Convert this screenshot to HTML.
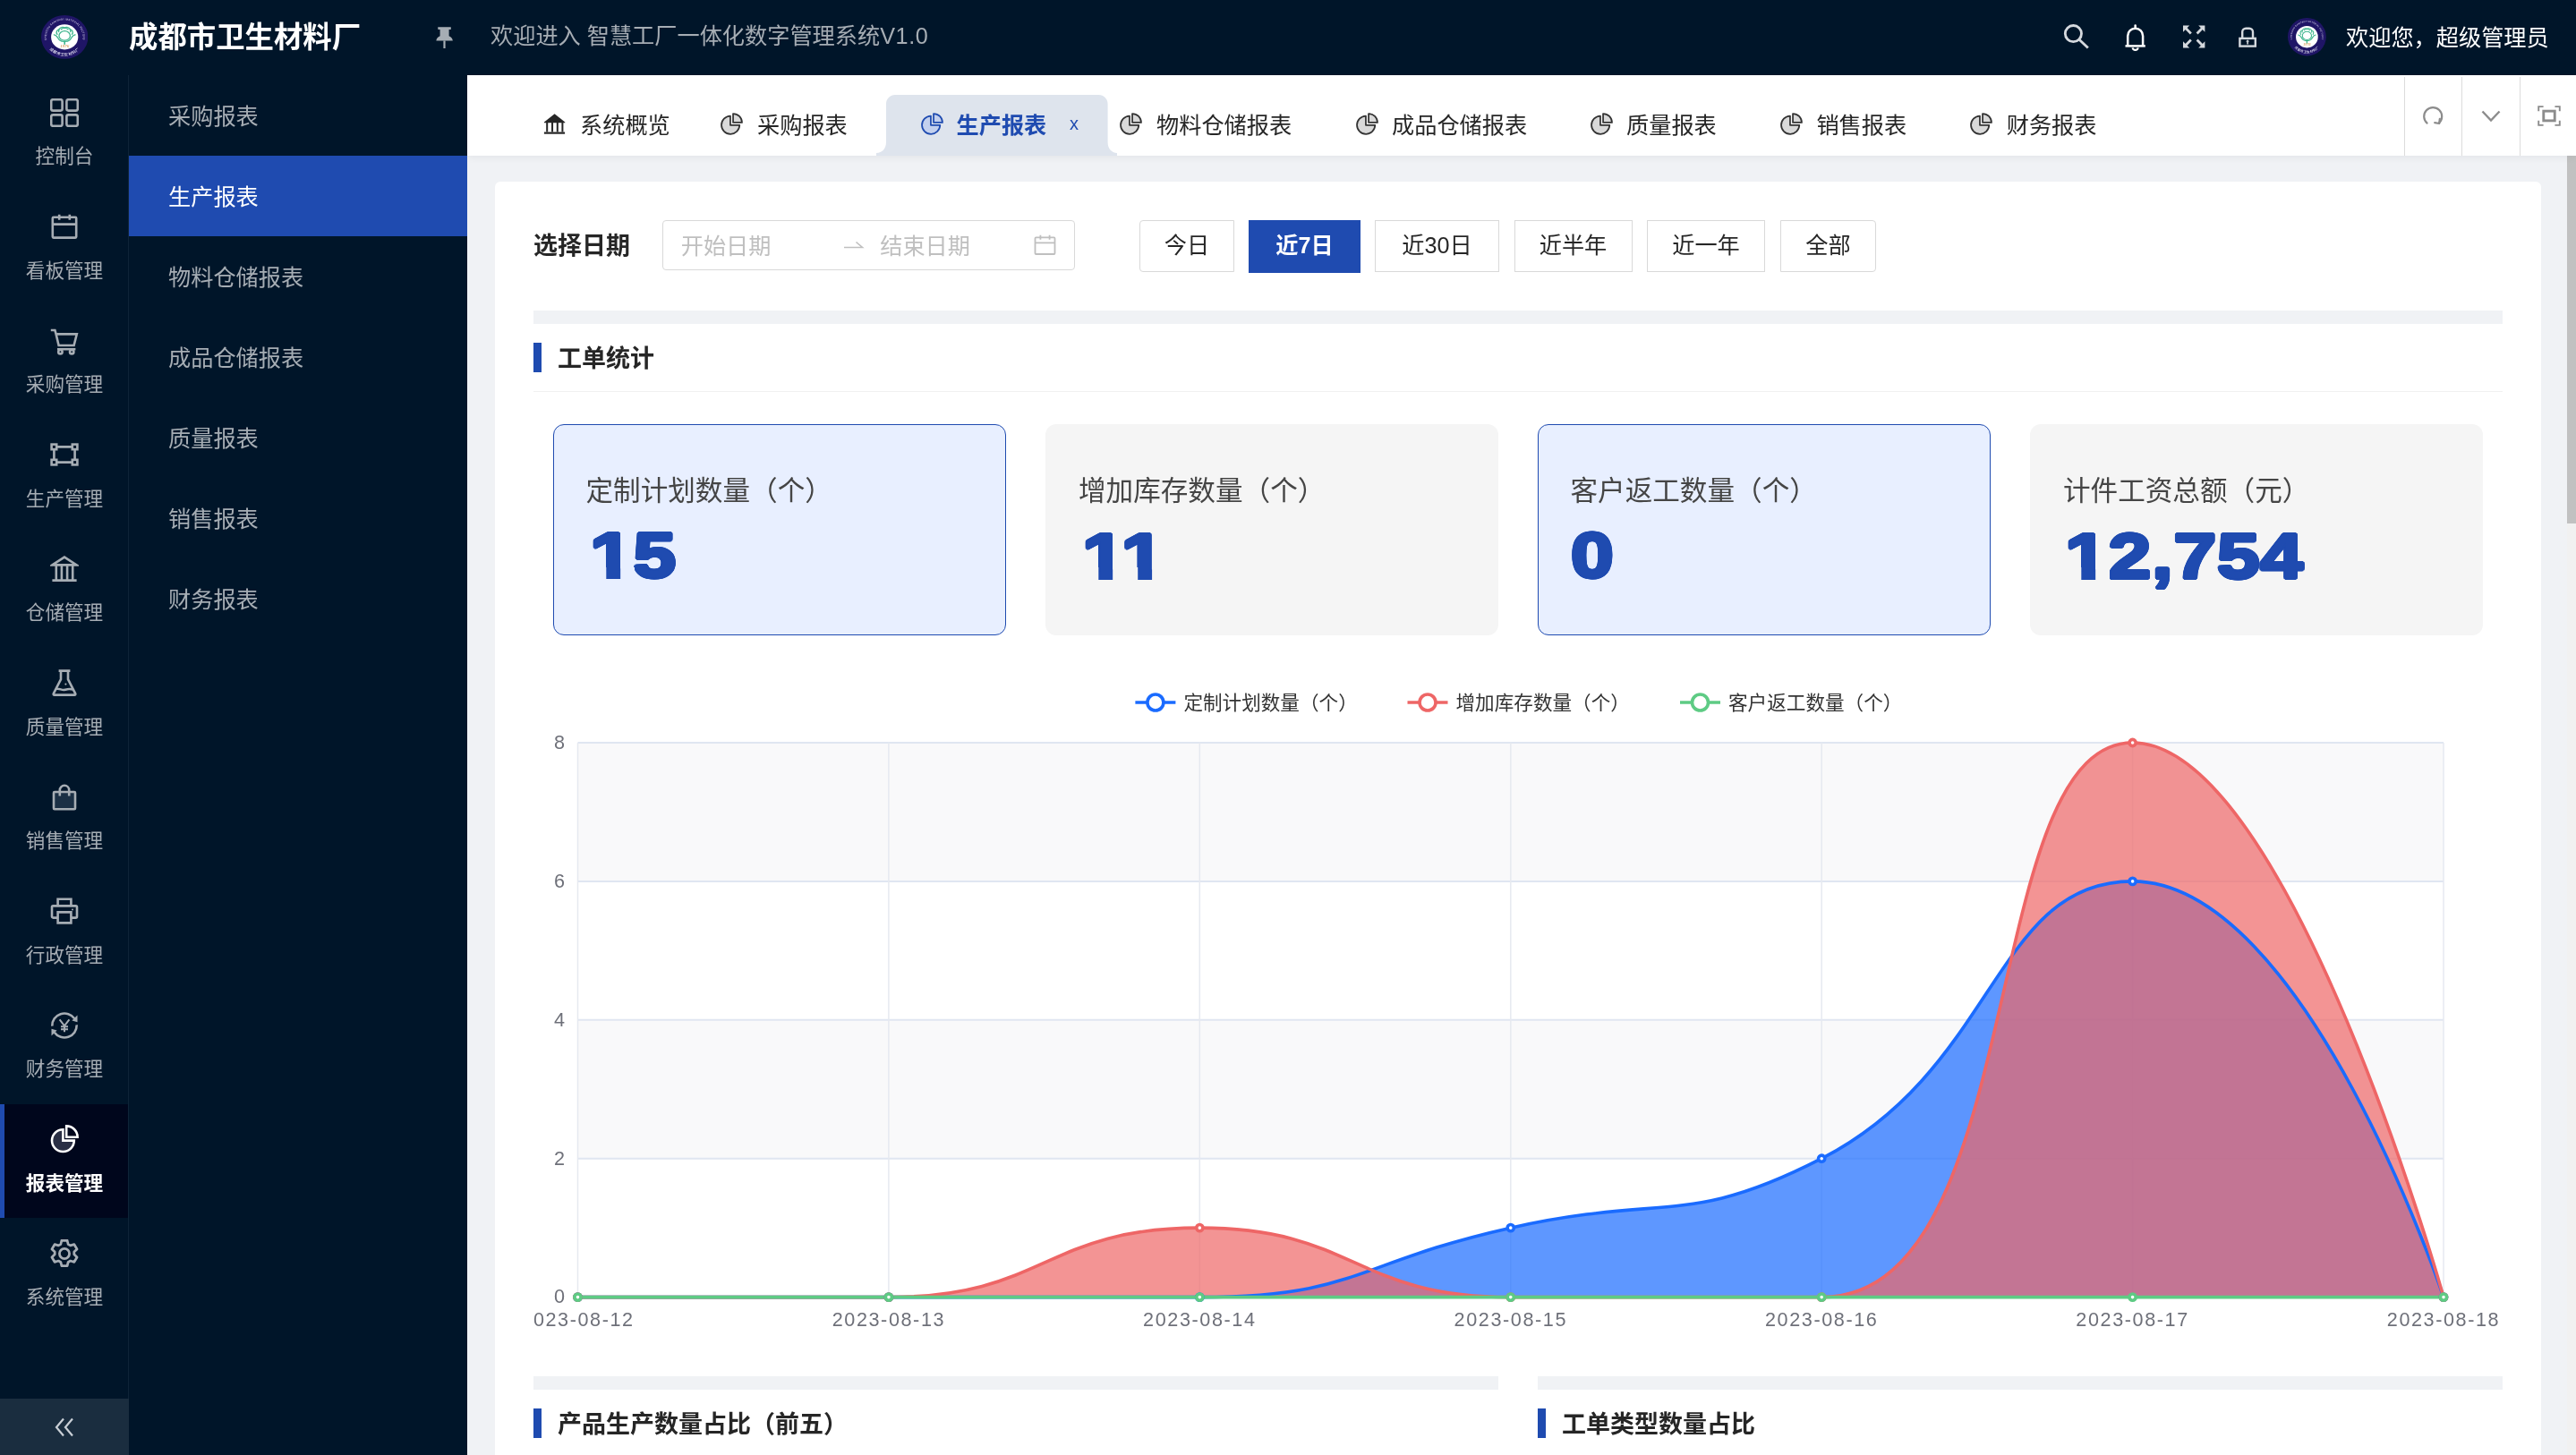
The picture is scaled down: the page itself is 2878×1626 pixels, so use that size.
<!DOCTYPE html>
<html lang="zh-CN"><head><meta charset="utf-8"><title>成都市卫生材料厂 - 生产报表</title>
<style>
*{box-sizing:border-box;margin:0;padding:0}
html,body{width:2878px;height:1626px;overflow:hidden;background:#f0f2f5}
body{position:relative;font-family:"Liberation Sans","Noto Sans CJK SC",sans-serif;color:#262626;-webkit-font-smoothing:antialiased}
.abs{position:absolute}
#hdr,#side,#sub,#tabs,#main{will-change:transform}
.t{position:absolute;white-space:nowrap;line-height:1}
#hdr{position:absolute;left:0;top:0;width:2878px;height:84px;background:#001529}
#side{position:absolute;left:0;top:84px;width:144px;height:1542px;background:#001529}
#sub{position:absolute;left:143px;top:84px;width:379px;height:1542px;background:#001529;border-left:1px solid #0f2438}
.si{position:absolute;left:0;width:143px;height:127px;color:#a6adb4}
.si svg{position:absolute;left:56px;top:23.2px;width:32px;height:32px;fill:none;stroke:#a6adb4;stroke-width:2.6}
.si span{position:absolute;left:0;width:144px;text-align:center;top:76.5px;font-size:21.6px;line-height:24px;white-space:nowrap}
.si.act{background:#00061c;color:#fff}
.si.act:before{content:"";position:absolute;left:0;top:0;width:5px;height:100%;background:#1f4bb0}
.si.act svg{stroke:#fff}
.si.act span{font-weight:700}
.sm{position:absolute;left:0;width:378px;height:90px;color:#a6adb4;font-size:25.2px;line-height:93px;padding-left:44px;white-space:nowrap}
.sm.act{background:#1f4bb0;color:#fff}
#tabs{position:absolute;left:522px;top:84px;width:2356px;height:90px;background:#fff;box-shadow:0 2px 8px rgba(0,21,41,.06)}
.tab{position:absolute;top:0;height:90px}
.tab .tx{position:absolute;top:43px;font-size:25.2px;line-height:28px;color:#262626;white-space:nowrap}
.tab svg{position:absolute}
#card{position:absolute;left:553px;top:203px;width:2286px;height:1500px;background:#fff;border-radius:6px}
.bar{position:absolute;height:15px;background:#f0f2f5}
.sec{position:absolute;height:33px}
.sec i{position:absolute;left:0;top:0;width:9px;height:33px;background:#1f4bb0}
.sec b{position:absolute;left:27px;top:3px;font-size:27px;line-height:30px;font-weight:700;color:#262626;white-space:nowrap}
.btn{position:absolute;top:246px;height:57.6px;border:1px solid #d9d9d9;border-radius:0;background:#fff;font-size:25.2px;line-height:55px;text-align:center;color:#262626;white-space:nowrap}
.btn.first{border-radius:4px 0 0 4px}.btn.last{border-radius:0 4px 4px 0}
.btn.on{height:58.6px;background:#1f4bb0;border-color:#1f4bb0;color:#fff;font-weight:700}
.stat{position:absolute;top:474px;width:506px;height:236px;border-radius:12px;background:#f5f5f5}
.stat.hl{background:#e8efff;border:1.5px solid #1f4bb0}
.stat .lb{position:absolute;left:37px;top:56px;font-size:30.6px;line-height:36px;color:#454545;white-space:nowrap}
.stat.hl .lb{left:35.5px;top:54.5px}
.stat .nm{position:absolute;left:40px;top:102.8px;font-family:"Liberation Sans",sans-serif;font-weight:700;font-size:70.5px;line-height:90px;color:#1f4bb0;white-space:nowrap;text-shadow:1.70px 0.00px 0 #1f4bb0,1.57px 0.65px 0 #1f4bb0,1.20px 1.20px 0 #1f4bb0,0.65px 1.57px 0 #1f4bb0,0.00px 1.70px 0 #1f4bb0,-0.65px 1.57px 0 #1f4bb0,-1.20px 1.20px 0 #1f4bb0,-1.57px 0.65px 0 #1f4bb0,-1.70px 0.00px 0 #1f4bb0,-1.57px -0.65px 0 #1f4bb0,-1.20px -1.20px 0 #1f4bb0,-0.65px -1.57px 0 #1f4bb0,-0.00px -1.70px 0 #1f4bb0,0.65px -1.57px 0 #1f4bb0,1.20px -1.20px 0 #1f4bb0,1.57px -0.65px 0 #1f4bb0;letter-spacing:.5px;transform:scaleX(1.22);transform-origin:left center}
.stat.hl .nm{top:101.3px}
.stat .nm i{position:absolute;top:57.5px;height:15.5px;background:#f5f5f5}
.stat.hl .nm i{background:#e8efff}
</style></head>
<body>
<div id="main" class="abs" style="left:0;top:0;width:2878px;height:1626px"><div id="card"></div>
<div class="abs" style="left:2868px;top:174px;width:10px;height:1452px;background:#f1f1f1"></div>
<div class="abs" style="left:2868px;top:174px;width:10px;height:411px;background:#c1c1c1"></div>
<div class="t" style="left:596px;top:260.4px;font-size:27px;line-height:30px;font-weight:700;color:#262626">选择日期</div>
<div class="abs" style="left:740px;top:246px;width:461px;height:56px;border:1px solid #d9d9d9;border-radius:4px;background:#fff"></div>
<div class="t" style="left:760.7px;top:260.7px;font-size:25.2px;line-height:28px;color:#bfbfbf">开始日期</div>
<svg class="abs" style="left:942px;top:266px;width:24px;height:14px" viewBox="0 0 24 14" fill="none" stroke="#bfbfbf" stroke-width="1.600"><path d="M1 10.500h20.500l-7-6"/></svg>
<div class="t" style="left:983.2px;top:260.7px;font-size:25.2px;line-height:28px;color:#bfbfbf">结束日期</div>
<svg class="abs" style="left:1155px;top:261.3px;width:25px;height:25px" viewBox="0 0 25 25" fill="none" stroke="#bfbfbf" stroke-width="1.800"><rect x="1.500" y="4.400" width="22" height="18.600" rx="1"/><path d="M7.400 1.800v5M17.600 1.800v5M1.500 10.400h22"/></svg>
<div class="btn first" style="left:1273px;width:106px">今日</div>
<div class="btn on" style="left:1395px;width:125px">近7日</div>
<div class="btn" style="left:1536px;width:139px">近30日</div>
<div class="btn" style="left:1691.5px;width:132px">近半年</div>
<div class="btn" style="left:1840px;width:132px">近一年</div>
<div class="btn last" style="left:1989px;width:107px">全部</div>
<div class="bar" style="left:596px;top:347px;width:2200px"></div>
<div class="sec" style="left:596px;top:383px"><i></i><b>工单统计</b></div>
<div class="abs" style="left:596px;top:436.500px;width:2200px;height:1.500px;background:#f0f0f0"></div>
<div class="stat hl" style="left:618px"><div class="lb">定制计划数量（个）</div><div class="nm" style="left:40.2px">15<i style="left:0.84px;width:13.91px"></i><i style="left:27.83px;width:13.02px"></i></div></div>
<div class="stat" style="left:1168px"><div class="lb">增加库存数量（个）</div><div class="nm" style="left:40.6px">11<i style="left:0.84px;width:13.91px"></i><i style="left:27.83px;width:13.02px"></i><i style="left:36.66px;width:13.91px"></i><i style="left:63.65px;width:13.02px"></i></div></div>
<div class="stat hl" style="left:1718px"><div class="lb">客户返工数量（个）</div><div class="nm" style="left:36.2px">0</div></div>
<div class="stat" style="left:2268px"><div class="lb">计件工资总额（元）</div><div class="nm" style="left:39px">12,754<i style="left:0.84px;width:13.91px"></i><i style="left:27.83px;width:13.02px"></i></div></div>
<svg class="abs" style="left:596px;top:740px;width:2200px;height:790px;overflow:hidden" viewBox="0 0 2200 790" font-family="Liberation Sans,Noto Sans CJK SC,sans-serif">
<rect x="49.5" y="90.0" width="2084.5" height="154.9" fill="#f9f9fa"/>
<rect x="49.5" y="399.8" width="2084.5" height="154.9" fill="#f9f9fa"/>
<path d="M49.5 709.6H2134.0" stroke="#e0e6f1" stroke-width="2" fill="none"/>
<path d="M49.5 554.7H2134.0" stroke="#e0e6f1" stroke-width="2" fill="none"/>
<path d="M49.5 399.8H2134.0" stroke="#e0e6f1" stroke-width="2" fill="none"/>
<path d="M49.5 244.9H2134.0" stroke="#e0e6f1" stroke-width="2" fill="none"/>
<path d="M49.5 90.0H2134.0" stroke="#e0e6f1" stroke-width="2" fill="none"/>
<path d="M49.5 90.0V709.6" stroke="#e6e9f0" stroke-width="1.500" fill="none"/>
<path d="M396.9 90.0V709.6" stroke="#e6e9f0" stroke-width="1.500" fill="none"/>
<path d="M744.3 90.0V709.6" stroke="#e6e9f0" stroke-width="1.500" fill="none"/>
<path d="M1091.8 90.0V709.6" stroke="#e6e9f0" stroke-width="1.500" fill="none"/>
<path d="M1439.2 90.0V709.6" stroke="#e6e9f0" stroke-width="1.500" fill="none"/>
<path d="M1786.6 90.0V709.6" stroke="#e6e9f0" stroke-width="1.500" fill="none"/>
<path d="M2134.0 90.0V709.6" stroke="#e6e9f0" stroke-width="1.500" fill="none"/>
<text x="35.0" y="716.4" font-size="21.600" text-anchor="end" fill="#6e7079">0</text>
<text x="35.0" y="561.5" font-size="21.600" text-anchor="end" fill="#6e7079">2</text>
<text x="35.0" y="406.6" font-size="21.600" text-anchor="end" fill="#6e7079">4</text>
<text x="35.0" y="251.7" font-size="21.600" text-anchor="end" fill="#6e7079">6</text>
<text x="35.0" y="96.8" font-size="21.600" text-anchor="end" fill="#6e7079">8</text>
<text x="49.5" y="741.6" font-size="21.600" text-anchor="middle" fill="#6e7079" letter-spacing="1.600">2023-08-12</text>
<text x="396.9" y="741.6" font-size="21.600" text-anchor="middle" fill="#6e7079" letter-spacing="1.600">2023-08-13</text>
<text x="744.3" y="741.6" font-size="21.600" text-anchor="middle" fill="#6e7079" letter-spacing="1.600">2023-08-14</text>
<text x="1091.8" y="741.6" font-size="21.600" text-anchor="middle" fill="#6e7079" letter-spacing="1.600">2023-08-15</text>
<text x="1439.2" y="741.6" font-size="21.600" text-anchor="middle" fill="#6e7079" letter-spacing="1.600">2023-08-16</text>
<text x="1786.6" y="741.6" font-size="21.600" text-anchor="middle" fill="#6e7079" letter-spacing="1.600">2023-08-17</text>
<text x="2134.0" y="741.6" font-size="21.600" text-anchor="middle" fill="#6e7079" letter-spacing="1.600">2023-08-18</text>
<path d="M49.50 709.60 C49.50 709.60 223.21 709.60 396.92 709.60 C570.63 709.60 572.74 709.60 744.34 709.60 C920.16 709.60 918.05 670.87 1091.76 632.15 C1265.47 593.42 1288.63 632.15 1439.18 554.70 C1636.05 453.42 1631.95 244.90 1786.60 244.90 C1979.37 244.90 2134.02 709.60 2134.02 709.60 L2134.02 709.60 L49.50 709.60Z" fill="#1a6bff" fill-opacity="0.7" stroke="none"/>
<path d="M49.50 709.60 C49.50 709.60 225.32 709.60 396.92 709.60 C572.74 709.60 570.63 632.15 744.34 632.15 C918.05 632.15 915.94 709.60 1091.76 709.60 C1263.36 709.60 1325.07 709.60 1439.18 709.60 C1672.49 709.60 1612.89 90.00 1786.60 90.00 C1960.31 90.00 2134.02 709.60 2134.02 709.60 L2134.02 709.60 L49.50 709.60Z" fill="#ee6666" fill-opacity="0.7" stroke="none"/>
<path d="M49.50 709.60 C49.50 709.60 223.21 709.60 396.92 709.60 C570.63 709.60 570.63 709.60 744.34 709.60 C918.05 709.60 918.05 709.60 1091.76 709.60 C1265.47 709.60 1265.47 709.60 1439.18 709.60 C1612.89 709.60 1612.89 709.60 1786.60 709.60 C1960.31 709.60 2134.02 709.60 2134.02 709.60 L2134.02 709.60 L49.50 709.60Z" fill="#5ecb84" fill-opacity="0.7" stroke="none"/>
<path d="M49.50 709.60 C49.50 709.60 223.21 709.60 396.92 709.60 C570.63 709.60 572.74 709.60 744.34 709.60 C920.16 709.60 918.05 670.87 1091.76 632.15 C1265.47 593.42 1288.63 632.15 1439.18 554.70 C1636.05 453.42 1631.95 244.90 1786.60 244.90 C1979.37 244.90 2134.02 709.60 2134.02 709.60" fill="none" stroke="#1a6bff" stroke-width="3.600" stroke-linejoin="bevel"/>
<path d="M49.50 709.60 C49.50 709.60 225.32 709.60 396.92 709.60 C572.74 709.60 570.63 632.15 744.34 632.15 C918.05 632.15 915.94 709.60 1091.76 709.60 C1263.36 709.60 1325.07 709.60 1439.18 709.60 C1672.49 709.60 1612.89 90.00 1786.60 90.00 C1960.31 90.00 2134.02 709.60 2134.02 709.60" fill="none" stroke="#ee6666" stroke-width="3.600" stroke-linejoin="bevel"/>
<path d="M49.50 709.60 C49.50 709.60 223.21 709.60 396.92 709.60 C570.63 709.60 570.63 709.60 744.34 709.60 C918.05 709.60 918.05 709.60 1091.76 709.60 C1265.47 709.60 1265.47 709.60 1439.18 709.60 C1612.89 709.60 1612.89 709.60 1786.60 709.60 C1960.31 709.60 2134.02 709.60 2134.02 709.60" fill="none" stroke="#5ecb84" stroke-width="3.600" stroke-linejoin="bevel"/>
<circle cx="49.50" cy="709.60" r="3.600" fill="#fff" stroke="#1a6bff" stroke-width="3.600"/>
<circle cx="396.92" cy="709.60" r="3.600" fill="#fff" stroke="#1a6bff" stroke-width="3.600"/>
<circle cx="744.34" cy="709.60" r="3.600" fill="#fff" stroke="#1a6bff" stroke-width="3.600"/>
<circle cx="1091.76" cy="632.15" r="3.600" fill="#fff" stroke="#1a6bff" stroke-width="3.600"/>
<circle cx="1439.18" cy="554.70" r="3.600" fill="#fff" stroke="#1a6bff" stroke-width="3.600"/>
<circle cx="1786.60" cy="244.90" r="3.600" fill="#fff" stroke="#1a6bff" stroke-width="3.600"/>
<circle cx="2134.02" cy="709.60" r="3.600" fill="#fff" stroke="#1a6bff" stroke-width="3.600"/>
<circle cx="49.50" cy="709.60" r="3.600" fill="#fff" stroke="#ee6666" stroke-width="3.600"/>
<circle cx="396.92" cy="709.60" r="3.600" fill="#fff" stroke="#ee6666" stroke-width="3.600"/>
<circle cx="744.34" cy="632.15" r="3.600" fill="#fff" stroke="#ee6666" stroke-width="3.600"/>
<circle cx="1091.76" cy="709.60" r="3.600" fill="#fff" stroke="#ee6666" stroke-width="3.600"/>
<circle cx="1439.18" cy="709.60" r="3.600" fill="#fff" stroke="#ee6666" stroke-width="3.600"/>
<circle cx="1786.60" cy="90.00" r="3.600" fill="#fff" stroke="#ee6666" stroke-width="3.600"/>
<circle cx="2134.02" cy="709.60" r="3.600" fill="#fff" stroke="#ee6666" stroke-width="3.600"/>
<circle cx="49.50" cy="709.60" r="3.600" fill="#fff" stroke="#5ecb84" stroke-width="3.600"/>
<circle cx="396.92" cy="709.60" r="3.600" fill="#fff" stroke="#5ecb84" stroke-width="3.600"/>
<circle cx="744.34" cy="709.60" r="3.600" fill="#fff" stroke="#5ecb84" stroke-width="3.600"/>
<circle cx="1091.76" cy="709.60" r="3.600" fill="#fff" stroke="#5ecb84" stroke-width="3.600"/>
<circle cx="1439.18" cy="709.60" r="3.600" fill="#fff" stroke="#5ecb84" stroke-width="3.600"/>
<circle cx="1786.60" cy="709.60" r="3.600" fill="#fff" stroke="#5ecb84" stroke-width="3.600"/>
<circle cx="2134.02" cy="709.60" r="3.600" fill="#fff" stroke="#5ecb84" stroke-width="3.600"/>
<path d="M672.4 45h45" stroke="#1a6bff" stroke-width="3.600" fill="none"/>
<circle cx="694.9" cy="45" r="9" fill="#fff" stroke="#1a6bff" stroke-width="3.600"/>
<text x="726.4" y="52.8" font-size="21.600" fill="#333">定制计划数量（个）</text>
<path d="M976.5 45h45" stroke="#ee6666" stroke-width="3.600" fill="none"/>
<circle cx="999.0" cy="45" r="9" fill="#fff" stroke="#ee6666" stroke-width="3.600"/>
<text x="1030.5" y="52.8" font-size="21.600" fill="#333">增加库存数量（个）</text>
<path d="M1281.0 45h45" stroke="#5ecb84" stroke-width="3.600" fill="none"/>
<circle cx="1303.5" cy="45" r="9" fill="#fff" stroke="#5ecb84" stroke-width="3.600"/>
<text x="1335.0" y="52.8" font-size="21.600" fill="#333">客户返工数量（个）</text>
</svg>
<div class="bar" style="left:596px;top:1538px;width:1078px"></div>
<div class="bar" style="left:1718px;top:1538px;width:1078px"></div>
<div class="sec" style="left:596px;top:1574px"><i></i><b>产品生产数量占比（前五）</b></div>
<div class="sec" style="left:1718px;top:1574px"><i></i><b>工单类型数量占比</b></div></div>
<div id="tabs">
<svg class="abs" style="left:456.8px;top:22px;width:269.6px;height:68px" viewBox="0 0 269.6 68"><path d="M0 68V65C6.6 65 11 60.0 11 53V10C11 4.500 15.5 0 21 0H248.6C254.1 0 258.6 4.500 258.6 10V53C258.6 60.0 263.0 65 269.6 65V68z" fill="#dee4ed"/></svg>
<svg class="abs" style="left:84.9px;top:42px;width:25px;height:25px" viewBox="0 0 25 25"><path d="M12.600 1.200L24.300 10.400V11.200H0.900V10.400z" fill="#262626"/><path d="M4.200 11v10.600M10.050 11v10.600M15.800 11v10.600M21.400 11v10.600" stroke="#262626" stroke-width="2"/><rect x="0.900" y="21.500" width="23.200" height="2.200" fill="#262626"/></svg>
<div class="t" style="left:126px;top:42px;font-size:25.2px;line-height:28px;">系统概览</div>
<svg class="abs" style="left:283px;top:42px;width:25px;height:25px" viewBox="0 0 24.200 24.200"><path d="M10.600 3.400A9.800 9.800 0 1 0 20.600 13.400H10.600z" fill="#d9d9d9" stroke="#333" stroke-width="1.700" stroke-linejoin="round"/><path d="M13.600 1v9.600h9.600A9.600 9.600 0 0 0 13.600 1z" fill="#d9d9d9" stroke="#333" stroke-width="1.700" stroke-linejoin="round"/></svg>
<div class="t" style="left:324px;top:42px;font-size:25.2px;line-height:28px;">采购报表</div>
<svg class="abs" style="left:506.5px;top:42px;width:25px;height:25px" viewBox="0 0 24.200 24.200"><path d="M10.600 3.400A9.800 9.800 0 1 0 20.600 13.400H10.600z" fill="#c3d0ee" stroke="#1f4bb0" stroke-width="1.700" stroke-linejoin="round"/><path d="M13.600 1v9.600h9.600A9.600 9.600 0 0 0 13.600 1z" fill="#c3d0ee" stroke="#1f4bb0" stroke-width="1.700" stroke-linejoin="round"/></svg>
<div class="t" style="left:546.5px;top:42px;font-size:25.2px;line-height:28px;color:#1f4bb0;font-weight:700;">生产报表</div>
<svg class="abs" style="left:729px;top:42px;width:25px;height:25px" viewBox="0 0 24.200 24.200"><path d="M10.600 3.400A9.800 9.800 0 1 0 20.600 13.400H10.600z" fill="#d9d9d9" stroke="#333" stroke-width="1.700" stroke-linejoin="round"/><path d="M13.600 1v9.600h9.600A9.600 9.600 0 0 0 13.600 1z" fill="#d9d9d9" stroke="#333" stroke-width="1.700" stroke-linejoin="round"/></svg>
<div class="t" style="left:770px;top:42px;font-size:25.2px;line-height:28px;">物料仓储报表</div>
<svg class="abs" style="left:992.5px;top:42px;width:25px;height:25px" viewBox="0 0 24.200 24.200"><path d="M10.600 3.400A9.800 9.800 0 1 0 20.600 13.400H10.600z" fill="#d9d9d9" stroke="#333" stroke-width="1.700" stroke-linejoin="round"/><path d="M13.600 1v9.600h9.600A9.600 9.600 0 0 0 13.600 1z" fill="#d9d9d9" stroke="#333" stroke-width="1.700" stroke-linejoin="round"/></svg>
<div class="t" style="left:1033px;top:42px;font-size:25.2px;line-height:28px;">成品仓储报表</div>
<svg class="abs" style="left:1255px;top:42px;width:25px;height:25px" viewBox="0 0 24.200 24.200"><path d="M10.600 3.400A9.800 9.800 0 1 0 20.600 13.400H10.600z" fill="#d9d9d9" stroke="#333" stroke-width="1.700" stroke-linejoin="round"/><path d="M13.600 1v9.600h9.600A9.600 9.600 0 0 0 13.600 1z" fill="#d9d9d9" stroke="#333" stroke-width="1.700" stroke-linejoin="round"/></svg>
<div class="t" style="left:1295px;top:42px;font-size:25.2px;line-height:28px;">质量报表</div>
<svg class="abs" style="left:1467px;top:42px;width:25px;height:25px" viewBox="0 0 24.200 24.200"><path d="M10.600 3.400A9.800 9.800 0 1 0 20.600 13.400H10.600z" fill="#d9d9d9" stroke="#333" stroke-width="1.700" stroke-linejoin="round"/><path d="M13.600 1v9.600h9.600A9.600 9.600 0 0 0 13.600 1z" fill="#d9d9d9" stroke="#333" stroke-width="1.700" stroke-linejoin="round"/></svg>
<div class="t" style="left:1507.4px;top:42px;font-size:25.2px;line-height:28px;">销售报表</div>
<svg class="abs" style="left:1678.8000000000002px;top:42px;width:25px;height:25px" viewBox="0 0 24.200 24.200"><path d="M10.600 3.400A9.800 9.800 0 1 0 20.600 13.400H10.600z" fill="#d9d9d9" stroke="#333" stroke-width="1.700" stroke-linejoin="round"/><path d="M13.600 1v9.600h9.600A9.600 9.600 0 0 0 13.600 1z" fill="#d9d9d9" stroke="#333" stroke-width="1.700" stroke-linejoin="round"/></svg>
<div class="t" style="left:1719.6999999999998px;top:42px;font-size:25.2px;line-height:28px;">财务报表</div>
<div class="t" style="left:673px;top:40px;font-size:20px;line-height:28px;color:#1f4bb0">x</div>
<div class="abs" style="left:2164px;top:2px;width:1px;height:88px;background:#dcdcdc"></div>
<div class="abs" style="left:2228px;top:2px;width:1px;height:88px;background:#dcdcdc"></div>
<div class="abs" style="left:2293px;top:2px;width:1px;height:88px;background:#dcdcdc"></div>
<svg class="abs" style="left:2183px;top:33px;width:26px;height:26px" viewBox="0 0 26 26" fill="none" stroke="#8c8c8c" stroke-width="2.200" stroke-linecap="round"><path d="M6.600 20.600A10 10 0 1 1 20 20.400"/><path d="M20.800 15.800l-.6 5.200-5-.8" stroke-linejoin="round"/></svg>
<svg class="abs" style="left:2250px;top:38.500px;width:22px;height:14px" viewBox="0 0 22 14" fill="none" stroke="#8c8c8c" stroke-width="2.400"><path d="M1.500 1.500L11 11.500L20.500 1.500"/></svg>
<svg class="abs" style="left:2313px;top:34px;width:26px;height:23px" viewBox="0 0 27 24" fill="none" stroke="#8c8c8c" stroke-width="2.400"><rect x="7" y="6.400" width="13" height="11.200" stroke-width="3"/><path d="M1.200 6.400V1.200h5.600M25.800 6.400V1.200h-5.600M1.200 17.600v5.200h5.600M25.800 17.600v5.200h-5.600" stroke-width="2"/></svg>
</div>
<div id="hdr">
<svg class="abs" style="left:45.8px;top:16.9px;width:52.4px;height:48.8px" viewBox="-26 -26 52 52" preserveAspectRatio="none">
<circle r="26" fill="#1f1566"/>
<circle r="15" fill="#fff"/>
<path id="lpha" d="M-19.400 5.200A20.100 20.100 0 1 1 19.400 5.200" fill="none"/>
<path id="lphb" d="M-22.300 2A22.400 22.400 0 0 0 22.300 2" fill="none"/>
<text font-size="3.200" fill="#dcd9f0" font-family="Liberation Sans,sans-serif" letter-spacing="0.150"><textPath href="#lpha" startOffset="50%" text-anchor="middle">CHENGDU SANITARY MATERIAL FACTORY</textPath></text>
<text font-size="4.200" fill="#eceaf8" font-family="Liberation Sans,Noto Sans CJK SC,sans-serif" font-weight="500" letter-spacing="0.500"><textPath href="#lphb" startOffset="50%" text-anchor="middle">成都市卫生材料厂</textPath></text>
<g fill="none" stroke="#3fb58e" stroke-width="1.300" stroke-linecap="round">
<ellipse cx="0" cy="-1.600" rx="6.200" ry="5.600"/>
<path d="M-6.500 -6.200C-7.500 -10.500 -3 -12.500 0 -11.200C3 -12.500 7.500 -10.500 6.500 -6.200"/>
<path d="M-3.800 -9.200C-2 -11 2 -11 3.800 -9.200"/>
<path d="M-11.800 -2.800C-8.500 -2.800 -7.800 1.500 -5.600 3.600C-3 6 3 6 5.600 3.600C7.800 1.500 8.500 -2.800 11.800 -2.800"/>
<path d="M-8.200 -3.200C-10 -6 -8.500 -8.800 -6 -8.800M8.200 -3.200C10 -6 8.500 -8.800 6 -8.800"/>
<path d="M0 5.400v3" stroke-width="1.600"/>
</g>
<text x="0" y="12.600" font-size="5" text-anchor="middle" fill="#d9a066" font-family="Liberation Serif,serif" font-style="italic" font-weight="700">1976</text>
</svg>
<div class="t" style="left:144px;top:24.4px;font-size:32.4px;line-height:36px;font-weight:700;color:#fff">成都市卫生材料厂</div>
<svg class="abs" style="left:486px;top:29px;width:21px;height:26px" viewBox="0 0 21 26"><path d="M3.2 1.200h14.600v2.800h-2.200v7.200c2.600 1.200 4.200 3 4.200 5.200H1.400c0-2.200 1.600-4 4.200-5.200V4H3.400z" fill="#a6adb4"/><path d="M10.500 16.400v8.600" stroke="#a6adb4" stroke-width="2.200"/></svg>
<div class="t" style="left:548px;top:24.6px;font-size:25.2px;line-height:30px;color:#a6adb4">欢迎进入 智慧工厂一体化数字管理系统<span style="letter-spacing:.6px">V1.0</span></div>
<svg class="abs" style="left:2290px;top:14px;width:250px;height:56px" viewBox="0 0 250 56" fill="none">
<circle cx="26.400" cy="23.600" r="9.100" stroke="#d5d9de" stroke-width="2.800"/><path d="M33 30.200L42.800 39.600" stroke="#d5d9de" stroke-width="2.800"/>
<g stroke="#fff" stroke-width="2.500"><path d="M84.500 37.400H106.800"/><path d="M87.200 37.400V26.200a8.450 8.450 0 0 1 16.900 0V37.400"/><path d="M95.650 17.600V14.600" stroke-linecap="round"/><path d="M92.600 39.400a3.100 3.100 0 0 0 6.100 0" stroke-width="2.200"/></g>
<path d="M149.0 14.6L156.2 14.6L149.0 21.8z" fill="#d5d9de" stroke="none"/>
<path d="M152.0 17.6L157.8 23.4" stroke="#d5d9de" stroke-width="2.800" stroke-linecap="butt"/>
<path d="M149.0 39.4L156.2 39.4L149.0 32.2z" fill="#d5d9de" stroke="none"/>
<path d="M152.0 36.4L157.8 30.6" stroke="#d5d9de" stroke-width="2.800" stroke-linecap="butt"/>
<path d="M173.4 14.6L166.2 14.6L173.4 21.8z" fill="#d5d9de" stroke="none"/>
<path d="M170.4 17.6L164.6 23.4" stroke="#d5d9de" stroke-width="2.800" stroke-linecap="butt"/>
<path d="M173.4 39.4L166.2 39.4L173.4 32.2z" fill="#d5d9de" stroke="none"/>
<path d="M170.4 36.4L164.6 30.6" stroke="#d5d9de" stroke-width="2.800" stroke-linecap="butt"/>
<g stroke="#d5d9de" stroke-width="2.400"><rect x="212.400" y="28.900" width="17.400" height="8.700"/><path d="M215.200 28.900V21.700a4 4 0 0 1 4-4h3.800a4 4 0 0 1 4 4V28.900"/><path d="M221.100 35.600V32" stroke-width="1.600"/></g><path d="M219.100 32.600l2-2.300 2 2.300z" fill="#d5d9de"/>
</svg>
<svg class="abs" style="left:2555.9px;top:20.2px;width:42.8px;height:42.4px" viewBox="-26 -26 52 52" preserveAspectRatio="none">
<circle r="26" fill="#1f1566"/>
<circle r="15" fill="#fff"/>
<path id="lpua" d="M-19.400 5.200A20.100 20.100 0 1 1 19.400 5.200" fill="none"/>
<path id="lpub" d="M-22.300 2A22.400 22.400 0 0 0 22.300 2" fill="none"/>
<text font-size="3.200" fill="#dcd9f0" font-family="Liberation Sans,sans-serif" letter-spacing="0.150"><textPath href="#lpua" startOffset="50%" text-anchor="middle">CHENGDU SANITARY MATERIAL FACTORY</textPath></text>
<text font-size="4.200" fill="#eceaf8" font-family="Liberation Sans,Noto Sans CJK SC,sans-serif" font-weight="500" letter-spacing="0.500"><textPath href="#lpub" startOffset="50%" text-anchor="middle">成都市卫生材料厂</textPath></text>
<g fill="none" stroke="#3fb58e" stroke-width="1.300" stroke-linecap="round">
<ellipse cx="0" cy="-1.600" rx="6.200" ry="5.600"/>
<path d="M-6.500 -6.200C-7.500 -10.500 -3 -12.500 0 -11.200C3 -12.500 7.500 -10.500 6.500 -6.200"/>
<path d="M-3.800 -9.200C-2 -11 2 -11 3.800 -9.200"/>
<path d="M-11.800 -2.800C-8.500 -2.800 -7.800 1.500 -5.600 3.600C-3 6 3 6 5.600 3.600C7.800 1.500 8.500 -2.800 11.800 -2.800"/>
<path d="M-8.200 -3.200C-10 -6 -8.500 -8.800 -6 -8.800M8.200 -3.200C10 -6 8.500 -8.800 6 -8.800"/>
<path d="M0 5.400v3" stroke-width="1.600"/>
</g>
<text x="0" y="12.600" font-size="5" text-anchor="middle" fill="#d9a066" font-family="Liberation Serif,serif" font-style="italic" font-weight="700">1976</text>
</svg>
<div class="t" style="left:2621px;top:27px;font-size:25.2px;line-height:30px;color:#fff">欢迎您，超级管理员</div>
</div>
<div id="side">
<div class="si" style="top:2.8px"><svg viewBox="0 0 32 32"><rect x="1.2" y="1.2" width="12.4" height="12.4" rx="2"/><rect x="18.4" y="1.2" width="12.4" height="12.4" rx="2"/><rect x="1.2" y="18.4" width="12.4" height="12.4" rx="2"/><rect x="18.4" y="18.4" width="12.4" height="12.4" rx="2"/></svg><span>控制台</span></div>
<div class="si" style="top:130.3px"><svg viewBox="0 0 32 32"><rect x="2.8" y="5.8" width="26.4" height="22.8" rx="1"/><path d="M10.2 2.8v6M21.8 2.8v6M2.8 13.6h26.4"/></svg><span>看板管理</span></div>
<div class="si" style="top:257.7px"><svg viewBox="0 0 32 32"><path d="M0.8 4h4.6l1.2 4.4h23.2l-3.2 12.6H9.6L6.6 8.4M8 25.2h20.4"/><circle cx="11.4" cy="28.2" r="2.2"/><circle cx="24.2" cy="28.2" r="2.2"/></svg><span>采购管理</span></div>
<div class="si" style="top:385.2px"><svg viewBox="0 0 32 32"><rect x="1.6" y="4.6" width="5.6" height="5.6"/><rect x="24.8" y="4.6" width="5.6" height="5.6"/><rect x="1.6" y="21.8" width="5.6" height="5.6"/><rect x="24.8" y="21.8" width="5.6" height="5.6"/><path d="M7.2 7.4h17.6M7.2 24.6h17.6M4.4 10.2v11.6M27.6 10.2v11.6"/></svg><span>生产管理</span></div>
<div class="si" style="top:512.7px"><svg viewBox="0 0 32 32"><path d="M2.4 11.4L16 2.6l13.600 8.800zM2.400 28.600h27.200M6.800 11.800v16.400M12.900 11.800v16.400M19.100 11.800v16.400M25.200 11.800v16.400"/></svg><span>仓储管理</span></div>
<div class="si" style="top:640.1px"><svg viewBox="0 0 32 32"><path d="M9.6 2.6h12.8M12 2.6v9.6L3.8 28.2c-.4.8.1 1.4.9 1.4h22.6c.8 0 1.3-.6.9-1.4L20 12.2V2.6M6.4 23c4-1.2 6.6 1.8 10.2.8 2.8-.8 5-1.6 8.6-.2"/><circle cx="17.4" cy="17.6" r="1.1" fill="#a6adb4" stroke="none"/></svg><span>质量管理</span></div>
<div class="si" style="top:767.6px"><svg viewBox="0 0 32 32"><rect x="4" y="10" width="24" height="19.200" rx="1" fill="#1b3045"/><path d="M10.800 14.400V8a5.200 5.200 0 0 1 10.400 0v6.400"/></svg><span>销售管理</span></div>
<div class="si" style="top:895.1px"><svg viewBox="0 0 32 32"><path d="M8.6 10.4V2.8h14.8v7.6M8.6 23.6H3.4c-.8 0-1.4-.6-1.4-1.4V11.8c0-.8.6-1.4 1.4-1.4h25.2c.8 0 1.4.6 1.4 1.4v10.4c0 .8-.6 1.4-1.4 1.4h-5.2M8.6 17.4h14.8v12H8.6z"/><circle cx="25" cy="14.6" r="1" fill="#a6adb4" stroke="none"/></svg><span>行政管理</span></div>
<div class="si" style="top:1022.6px"><svg viewBox="0 0 32 32"><path d="M2.300 16.600A13.700 13.700 0 0 1 27.200 8.300M29.700 15.400A13.700 13.700 0 0 1 4.800 23.700"/><path d="M30.500 4.600V12.200L24.400 10.400zM1.500 27.400V19.800L7.600 21.600z" fill="#a6adb4" stroke="none"/><path d="M10.600 9.300L16 16.400L21.400 9.300M16 16.400V23.200M12 17.300h8M12 20.200h8" stroke-width="2"/></svg><span>财务管理</span></div>
<div class="si act" style="top:1150.0px"><svg viewBox="0 0 32 32"><path d="M14.4 5.2A12.4 12.4 0 1 0 26.8 17.6H14.4z" fill="#2a2f45"/><path d="M18.2 1.4v12.4h12.4A12.4 12.4 0 0 0 18.2 1.4z"/></svg><span>报表管理</span></div>
<div class="si" style="top:1277.5px"><svg viewBox="0 0 32 32"><g transform="translate(16 16) scale(1.07) translate(-16 -16)"><circle cx="16" cy="16" r="5.2"/><path d="M13.1 2.2h5.8l1 4 2.3 1.3 4-1.2 2.9 5-3 2.9v2.6l3 2.9-2.9 5-4-1.2-2.3 1.300-1 4h-5.800l-1-4-2.300-1.300-4 1.200-2.900-5 3-2.900v-2.600l-3-2.900 2.900-5 4 1.200 2.300-1.300z" stroke-linejoin="round"/></g></svg><span>系统管理</span></div>
</div>
<div id="sub">
<div class="sm" style="top:0px">采购报表</div>
<div class="sm act" style="top:90px">生产报表</div>
<div class="sm" style="top:180px">物料仓储报表</div>
<div class="sm" style="top:270px">成品仓储报表</div>
<div class="sm" style="top:360px">质量报表</div>
<div class="sm" style="top:450px">销售报表</div>
<div class="sm" style="top:540px">财务报表</div>
</div>
<div class="abs" style="left:0;top:1563px;width:144px;height:63px;background:#1a2d3f"><svg class="abs" style="left:60px;top:20px;width:24px;height:24px" viewBox="0 0 24 24" fill="none" stroke="#c9cfd6" stroke-width="2.200"><path d="M11 2.500L3 12l8 9.500M21 2.500L13 12l8 9.500"/></svg></div>
</body></html>
